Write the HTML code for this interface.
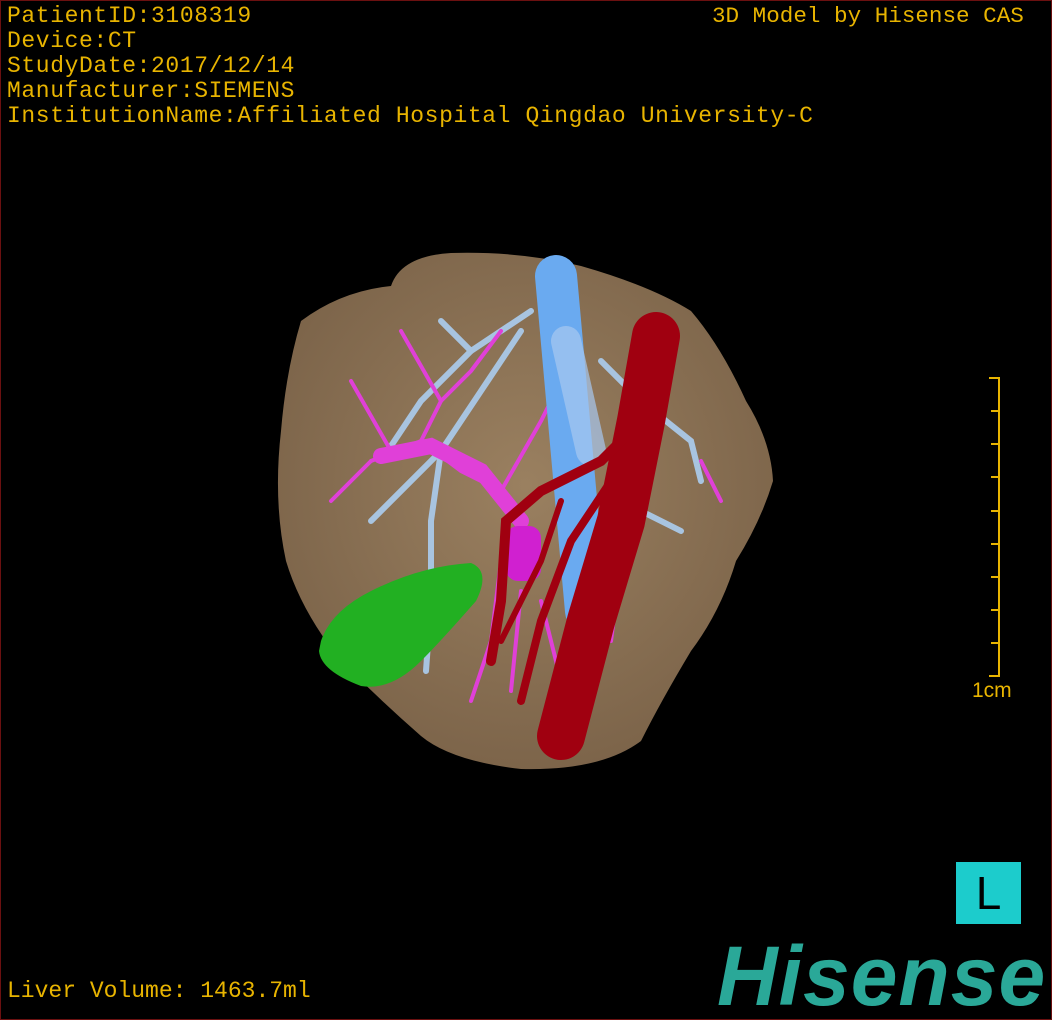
<!DOCTYPE html>
<html><head><meta charset="utf-8"><style>
html,body{margin:0;padding:0;background:#000;}
#c{position:relative;width:1050px;height:1018px;border:1px solid #6b1010;overflow:hidden;background:#000;}
.t{position:absolute;left:6px;color:#e8b400;font-family:"Liberation Mono",monospace;font-size:23px;line-height:25px;white-space:pre;}
</style></head><body><div id="c">
<div class="t" style="top:3px;letter-spacing:0.6px">PatientID:3108319
Device:CT
StudyDate:2017/12/14
Manufacturer:SIEMENS
InstitutionName:Affiliated Hospital Qingdao University-C</div>
<div class="t" style="top:3px;left:711px;font-size:22.6px">3D Model by Hisense CAS</div>
<div class="t" style="top:978px">Liver Volume: 1463.7ml</div>
<svg width="1050" height="1018" style="position:absolute;left:0;top:0">
<defs><radialGradient id="lv" cx="0.5" cy="0.45" r="0.6"><stop offset="0" stop-color="#9a8060"/><stop offset="1" stop-color="#7a6248"/></radialGradient></defs>
<path d="M300 320 Q340 290 390 285 Q400 255 450 252 Q520 250 580 265 Q650 285 690 310 Q720 345 745 400 Q770 440 772 480 Q760 520 735 560 Q720 610 690 650 Q660 700 640 740 Q600 770 520 768 Q450 760 420 735 Q380 700 340 660 Q300 610 285 560 Q272 500 280 430 Q285 370 300 320Z" fill="url(#lv)"/>
<g stroke="#a8c4e0" stroke-width="6" fill="none" stroke-linecap="round">
<path d="M530 310 L470 350 L420 400 L380 460"/><path d="M520 330 L480 390 L440 450 L430 520 L430 600 L425 670"/><path d="M470 350 L440 320"/><path d="M440 450 L370 520"/><path d="M600 360 L640 400 L690 440 L700 480"/><path d="M620 500 L680 530"/>
</g>
<g stroke="#e040d8" stroke-width="4" fill="none" stroke-linecap="round">
<path d="M370 460 L420 440 L460 470 L500 490 L520 510"/><path d="M420 440 L440 400 L470 370 L500 330"/><path d="M370 460 L330 500"/><path d="M390 450 L350 380"/><path d="M440 400 L400 330"/><path d="M500 490 L540 420 L560 380"/><path d="M500 560 L490 640 L470 700"/><path d="M520 590 L510 690"/><path d="M540 600 L560 680"/><path d="M620 560 L610 640"/><path d="M700 460 L720 500"/>
</g>
<path d="M380 455 L430 445 L480 470 L520 520" stroke="#e040d8" stroke-width="16" fill="none" stroke-linecap="round"/>
<rect x="505" y="525" width="35" height="55" rx="12" fill="#d020d0"/>
<path d="M555 275 L585 610" stroke="#6aaaf0" stroke-width="42" stroke-linecap="round"/>
<path d="M565 340 L590 450" stroke="#a8c8f0" stroke-width="30" stroke-linecap="round" opacity="0.7"/>
<g stroke="#a00010" fill="none" stroke-linecap="round">
<path d="M655 335 L640 420 L620 520 L590 620 L560 735" stroke-width="48"/>
<path d="M630 430 L600 460 L540 490 L505 520 L500 600 L490 660" stroke-width="10"/>
<path d="M610 480 L570 540 L540 620 L520 700" stroke-width="8"/>
<path d="M560 500 L540 560 L500 640" stroke-width="6"/>
</g>
<path d="M320 640 Q330 610 370 590 Q420 565 470 562 Q490 570 475 600 Q440 640 420 660 Q390 690 360 685 Q320 670 318 650Z" fill="#22b022"/>
<g stroke="#e8b400" stroke-width="2" fill="none">
<path d="M998 376 V676"/>
<path d="M988 377 H998 M990 410 H998 M990 443 H998 M990 476 H998 M990 510 H998 M990 543 H998 M990 576 H998 M990 609 H998 M990 642 H998 M988 675 H998"/>
</g>
</svg>
<div class="t" style="top:677px;left:971px;font-family:'Liberation Sans',sans-serif;font-size:21px">1cm</div>
<div style="position:absolute;left:955px;top:861px;width:65px;height:62px;background:#1ccccc;color:#000;font-family:'Liberation Sans',sans-serif;font-size:46px;line-height:62px;text-align:center">L</div>
<div style="position:absolute;left:716px;top:930px;color:#2aa898;font-family:'Liberation Sans',sans-serif;font-weight:bold;font-style:italic;font-size:84px;line-height:90px;letter-spacing:1px">Hisense</div>
</div></body></html>
